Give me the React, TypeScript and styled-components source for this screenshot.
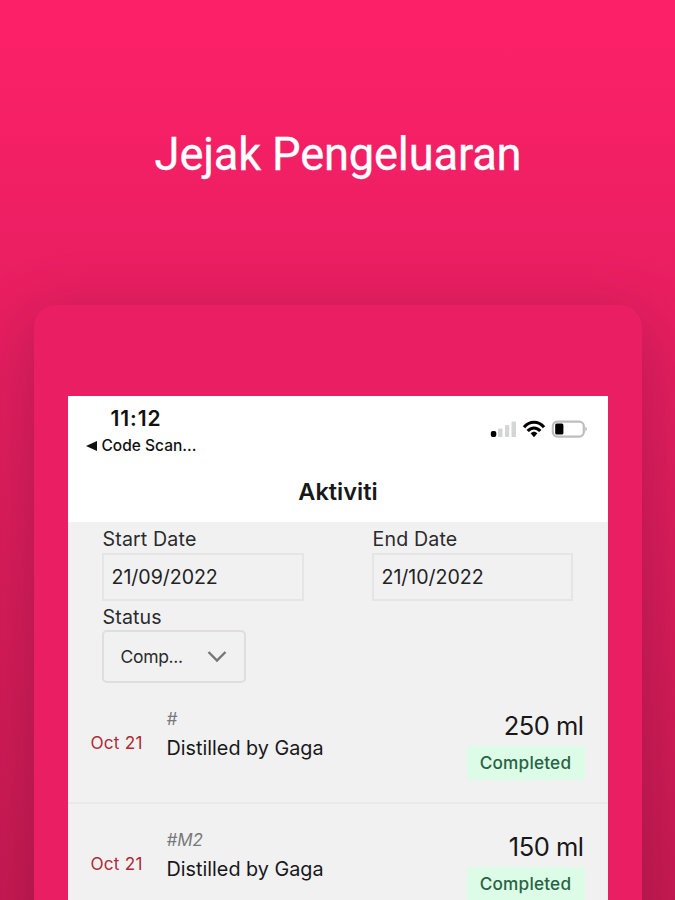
import React from "react";
import styled, { createGlobalStyle } from "styled-components";

const GlobalStyle = createGlobalStyle`
  *, *::before, *::after { box-sizing: border-box; }
  html, body { margin: 0; padding: 0; overflow: hidden; }
`;

const Page = styled.main`
  width: 675px;
  height: 900px;
  overflow: hidden;
  display: flex;
  flex-direction: column;
  align-items: center;
  background: linear-gradient(180deg, #fc2069 0, #fb2068 40px, #ee1f64 220px, #df1d5d 450px, #c71952 900px);
  font-family: Inter, "Liberation Sans", sans-serif;
  color: #18181a;
`;

const Headline = styled.h1`
  margin: 0;
  flex: none;
  height: 305px;
  padding: 125px 0 0 1px;
  font: 400 45.3px/60px Roboto, sans-serif;
  letter-spacing: -0.2px;
  color: #fff;
  -webkit-text-stroke: 0.3px #fff;
  white-space: nowrap;
`;

const Device = styled.section`
  width: 608px;
  height: 660px;
  flex: none;
  padding: 91px 34px 0;
  border-radius: 22px;
  background: #e91e63;
  box-shadow: 0 14px 64px rgba(80, 20, 50, 0.31);
`;

const Screen = styled.div`
  height: 100%;
  background: #f1f1f1;
`;

const Header = styled.header`
  height: 126px;
  background: #fff;
`;

const StatusBar = styled.div`
  height: 64px;
  display: flex;
  justify-content: space-between;
  padding: 11px 20px 0 18px;
`;

const Clock = styled.div`
  padding-left: 25px;
  font-size: 21px;
  line-height: 24px;
  letter-spacing: 0.9px;
  font-weight: 600;
  color: #111;
`;

const BackLink = styled.div`
  display: flex;
  align-items: center;
  gap: 5px;
  margin-top: 3px;
  font-size: 15.5px;
  line-height: 24px;
  font-weight: 500;
  color: #111;
`;

const Indicators = styled.div`
  display: flex;
  padding-top: 12px;
  height: 34px;
`;

const ScreenTitle = styled.h2`
  margin: 0;
  padding: 16px 0 0 1px;
  font-size: 23.5px;
  line-height: 32px;
  font-weight: 600;
  text-align: center;
`;

const Filters = styled.form`
  display: grid;
  grid-template-columns: 202px 201px;
  column-gap: 68px;
  padding: 3px 0 0 34px;
  height: 161px;
  align-content: start;
`;

const Field = styled.div`
  height: 78px;
`;

const FieldLabel = styled.div`
  height: 28px;
  padding-left: 1px;
  font-size: 19.6px;
  line-height: 28px;
  letter-spacing: 0.15px;
  color: #2b2b2d;
`;

const DateInput = styled.div`
  height: 48px;
  padding-left: 8px;
  border: 2px solid #e4e5e5;
  font-size: 19.6px;
  line-height: 45px;
  letter-spacing: -0.05px;
  color: #222224;
`;

const Select = styled.div`
  width: 144px;
  height: 53px;
  margin-top: -1px;
  padding: 0 17px 0 17px;
  display: flex;
  align-items: center;
  justify-content: space-between;
  border: 2px solid #dddede;
  border-radius: 5px;
  font-size: 17.5px;
  letter-spacing: -0.3px;
  color: #2b2b2d;
`;

const Entry = styled.article`
  height: 121px;
  display: flex;
  padding: 23px 23px 0;
  border-bottom: 2px solid #e8e9e9;
`;

const EntryDate = styled.time`
  width: 76px;
  padding-top: 24px;
  font-size: 17.2px;
  line-height: 26px;
  letter-spacing: 0.2px;
  color: #b02a37;
`;

const EntryBody = styled.div`
  flex: 1;
`;

const Reference = styled.div`
  font-size: 17px;
  line-height: 27px;
  font-style: italic;
  color: #77797c;
`;

const EntryTitle = styled.div`
  margin-top: 1px;
  font-size: 19.8px;
  line-height: 28px;
`;

const EntryAmount = styled.div`
  display: flex;
  flex-direction: column;
  align-items: flex-end;
`;

const Amount = styled.div`
  padding: 4px 1px 0 0;
  font-size: 25.5px;
  line-height: 32px;
  letter-spacing: -0.5px;
`;

const Badge = styled.div`
  margin-top: 4px;
  width: 118px;
  height: 34px;
  border-radius: 2px;
  background: #dcfce7;
  color: #286344;
  font-size: 17.2px;
  line-height: 34px;
  letter-spacing: 0.2px;
  font-weight: 500;
  text-align: center;
`;

const StatusIcons = () => (
  <svg width="98" height="22" viewBox="0 0 98 22">
    <rect x="0.8" y="12" width="5.5" height="6" rx="2" fill="#000" />
    <g fill="#d4d5d5">
      <rect x="8" y="9.5" width="4.5" height="8.5" rx="1" />
      <rect x="15" y="6" width="4.2" height="12" rx="1" />
      <rect x="21.5" y="2.5" width="4.5" height="15.5" rx="1" />
    </g>
    <g fill="none" stroke="#000" strokeWidth="3.1">
      <path d="M34 8.2C39.5 1.6 48.5 1.6 54 8.2" />
      <path d="M37.7 12.1C41.2 8 46.8 8 50.3 12.1" />
    </g>
    <path d="M40.6 14.3C42.5 12.2 45.5 12.2 47.4 14.3L44 18.2Z" fill="#000" />
    <rect x="62.8" y="2.6" width="31" height="15" rx="4.5" fill="#fff" stroke="#bdbebe" strokeWidth="2.2" />
    <rect x="65.2" y="4.6" width="8.2" height="11" rx="1.5" fill="#000" />
    <path d="M95.3 7.6Q99 10 95.3 12.7Z" fill="#bdbebe" />
  </svg>
);

const entries = [
  { date: "Oct 21", reference: "#", title: "Distilled by Gaga", amount: "250 ml", status: "Completed" },
  { date: "Oct 21", reference: "#M2", title: "Distilled by Gaga", amount: "150 ml", status: "Completed" },
];

export default function App() {
  return (
    <>
      <GlobalStyle />
      <Page>
        <Headline>Jejak Pengeluaran</Headline>
        <Device>
          <Screen>
            <Header>
              <StatusBar>
                <div>
                  <Clock>11:12</Clock>
                  <BackLink>
                    <svg width="11" height="10" viewBox="0 0 11 10">
                      <path d="M0 5L11 0V10Z" fill="#111" />
                    </svg>
                    Code Scan...
                  </BackLink>
                </div>
                <Indicators>
                  <StatusIcons />
                </Indicators>
              </StatusBar>
              <ScreenTitle>Aktiviti</ScreenTitle>
            </Header>
            <Filters>
              <Field>
                <FieldLabel>Start Date</FieldLabel>
                <DateInput>21/09/2022</DateInput>
              </Field>
              <Field>
                <FieldLabel>End Date</FieldLabel>
                <DateInput>21/10/2022</DateInput>
              </Field>
              <Field>
                <FieldLabel>Status</FieldLabel>
                <Select>
                  Comp...
                  <svg width="20" height="13" viewBox="0 0 20 13">
                    <path d="M1.5 2L10 10.5L18.5 2" fill="none" stroke="#747678" strokeWidth="2.4" />
                  </svg>
                </Select>
              </Field>
            </Filters>
            {entries.map((entry) => (
              <Entry key={entry.reference}>
                <EntryDate>{entry.date}</EntryDate>
                <EntryBody>
                  <Reference>{entry.reference}</Reference>
                  <EntryTitle>{entry.title}</EntryTitle>
                </EntryBody>
                <EntryAmount>
                  <Amount>{entry.amount}</Amount>
                  <Badge>{entry.status}</Badge>
                </EntryAmount>
              </Entry>
            ))}
          </Screen>
        </Device>
      </Page>
    </>
  );
}
